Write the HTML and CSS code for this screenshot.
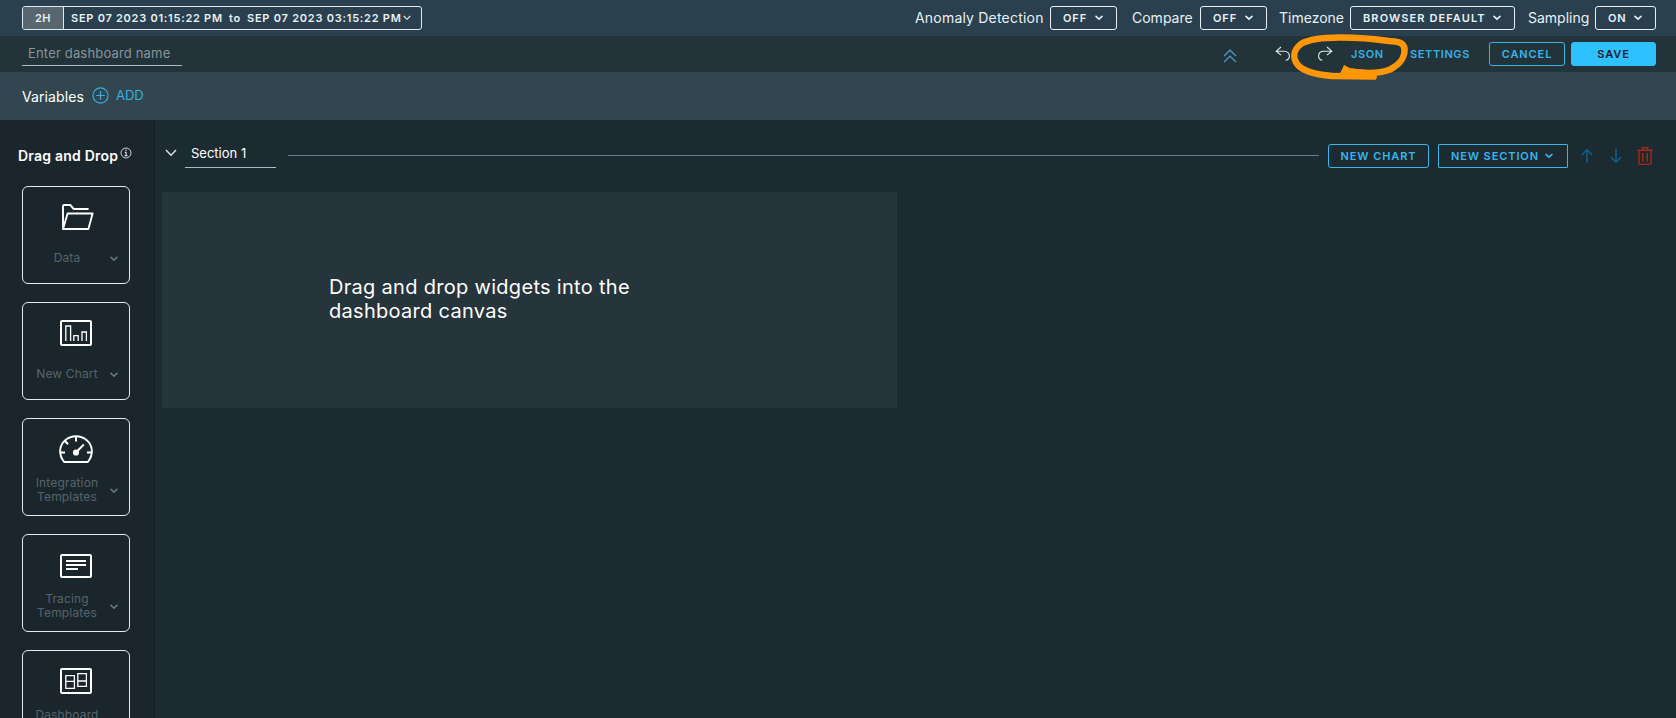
FILE: index.html
```html
<!DOCTYPE html>
<html lang="en">
<head>
<meta charset="utf-8">
<title>Dashboard editor</title>
<link rel="stylesheet" href="styles.css">
</head>
<body>
<svg class="defs" width="0" height="0">
  <symbol id="caret" viewBox="0 0 8 6"><path d="M1 1.3 4 4.2 7 1.3" fill="none" stroke="currentColor" stroke-width="1.6" stroke-linecap="round"/></symbol>
</svg>
<div class="app">
  <header class="topbar">
    <div class="range">
      <span class="range-preset">2H</span>
      <span class="range-text"><span class="from">SEP 07 2023 01:15:22 PM</span><span class="to">to</span><span class="until">SEP 07 2023 03:15:22 PM</span></span>
      <svg class="range-caret" width="8" height="6" viewBox="0 0 8 6"><path d="M.8 1 4 4.3 7.2 1" fill="none" stroke="currentColor" stroke-width="1.1"/></svg>
    </div>
    <div class="options">
      <div class="option anomaly"><span class="label">Anomaly Detection</span><button class="btn light"><span>OFF</span><svg class="caret"><use href="#caret"/></svg></button></div>
      <div class="option compare"><span class="label">Compare</span><button class="btn light"><span>OFF</span><svg class="caret"><use href="#caret"/></svg></button></div>
      <div class="option timezone"><span class="label">Timezone</span><button class="btn light"><span>BROWSER DEFAULT</span><svg class="caret"><use href="#caret"/></svg></button></div>
      <div class="option sampling"><span class="label">Sampling</span><button class="btn light"><span>ON</span><svg class="caret"><use href="#caret"/></svg></button></div>
    </div>
  </header>

  <div class="toolbar">
    <div class="name-field">Enter dashboard name</div>
    <div class="actions">
      <svg class="collapse" width="14" height="14" viewBox="0 0 14 14"><path d="M1 7 7 1.2 13 7M1 13 7 7.2 13 13" fill="none" stroke="currentColor" stroke-width="1.2"/></svg>
      <svg class="undo" width="16" height="16" viewBox="0 0 16 16"><path d="M6 1 1.2 5.2 6 9.2M1.5 5.2H9C12.5 5.2 14.4 7.3 14.4 10 14.4 12.2 13 13.8 10.8 14.4" fill="none" stroke="currentColor" stroke-width="1.1"/></svg>
      <svg class="redo" width="16" height="16" viewBox="0 0 16 16"><path d="M10 1 14.8 5.2 10 9.2M14.5 5.2H7C3.5 5.2 1.6 7.3 1.6 10 1.6 12.2 3 13.8 5.2 14.4" fill="none" stroke="currentColor" stroke-width="1.1"/></svg>
      <a class="link json">JSON</a>
      <a class="link settings">SETTINGS</a>
      <button class="btn outline cancel"><span>CANCEL</span></button>
      <button class="btn solid save"><span>SAVE</span></button>
    </div>
    <svg class="marker" width="124" height="50" viewBox="0 0 124 50">
      <path d="M62 39.500C76 41.500 92 41.500 102 37.500 113 32 117 24 116.500 17 116 10 109 9.500 101 9 84 6.500 70 5.500 52 5.500 34 5.500 21 7 13 12 5 18 5 26 9 32 16 41 32 43 44 44L88 44.500" fill="none" stroke="#ff9606" stroke-width="6.500" stroke-linejoin="round"/>
      <path d="M56 33 63 36.500 88 39 89 46.500 50 45 53.500 38.500Z" fill="#ff9606"/>
    </svg>
  </div>

  <div class="variables">
    <span class="variables-title">Variables</span>
    <svg class="plus" width="17" height="17" viewBox="0 0 17 17"><path d="M8.5 4.2V12.8M4.2 8.5H12.8" stroke="currentColor" stroke-width="1.2"/><circle cx="8.5" cy="8.5" r="7.6" fill="none" stroke="currentColor" stroke-width="1.1"/></svg>
    <span class="add">ADD</span>
  </div>

  <div class="body">
    <aside class="sidebar">
      <div class="sidebar-title"><span>Drag and Drop</span>
        <svg class="info" width="12" height="12" viewBox="0 0 12 12"><circle cx="6" cy="6" r="5" fill="none" stroke="currentColor" stroke-width=".9"/><path d="M6 2.6V4M4.7 5.2H6.1V8.6M4.4 8.8H7.7" fill="none" stroke="currentColor" stroke-width="1.1"/></svg>
      </div>
      <div class="cards">
        <div class="card">
          <svg class="glyph" width="36" height="32" viewBox="0 0 36 32"><path d="M5 26.500V4.200Q5 3 6.2 3H12.2L15.8 7H30.6M5 27 9.6 11.500H34.6L30.4 27Z" fill="none" stroke="currentColor" stroke-width="1.9" stroke-linejoin="round"/></svg>
          <div class="card-row"><span class="card-label">Data</span><svg class="caret"><use href="#caret"/></svg></div>
        </div>
        <div class="card">
          <svg class="glyph" width="36" height="32" viewBox="0 0 36 32"><rect x="3" y="3" width="30" height="24" rx="1" fill="none" stroke="currentColor" stroke-width="2"/><path d="M7.8 23V8H12.6V23M15.8 23V17.6H20.2V23M24 23V14H28.4V23" fill="none" stroke="currentColor" stroke-width="1.3"/></svg>
          <div class="card-row"><span class="card-label">New Chart</span><svg class="caret"><use href="#caret"/></svg></div>
        </div>
        <div class="card">
          <svg class="glyph" width="36" height="32" viewBox="0 0 36 32"><path d="M6.2 28C.2 20.500 1 11.500 7.5 6C13.5 1 22.5 1 28.5 6C35 11.500 35.8 20.500 29.8 28Z" fill="none" stroke="currentColor" stroke-width="1.9" stroke-linejoin="round"/><path d="M18 2V7.500M2.5 18.500H7M29 18.500H33.5M7.2 7.300 10 10.300M18 18.500 25.8 10.500" stroke="currentColor" stroke-width="2"/><circle cx="18" cy="18.500" r="3.1" fill="currentColor"/></svg>
          <div class="card-row"><span class="card-label">Integration<br>Templates</span><svg class="caret"><use href="#caret"/></svg></div>
        </div>
        <div class="card">
          <svg class="glyph" width="36" height="32" viewBox="0 0 36 32"><rect x="3" y="5" width="30" height="22" rx="1" fill="none" stroke="currentColor" stroke-width="2"/><path d="M8 11H28M8 15H28M8 19H20" stroke="currentColor" stroke-width="2"/></svg>
          <div class="card-row"><span class="card-label">Tracing<br>Templates</span><svg class="caret"><use href="#caret"/></svg></div>
        </div>
        <div class="card">
          <svg class="glyph" width="36" height="32" viewBox="0 0 36 32"><rect x="3" y="3" width="30" height="24" rx="1" fill="none" stroke="currentColor" stroke-width="2"/><path d="M7.8 9.6H16.4V22.4H7.8ZM7.8 15.4H16.4M19.8 7.6H28.4V20.4H19.8ZM19.8 15H28.4" fill="none" stroke="currentColor" stroke-width="1.3"/></svg>
          <div class="card-row"><span class="card-label">Dashboard<br>Templates</span><svg class="caret"><use href="#caret"/></svg></div>
        </div>
      </div>
    </aside>

    <main class="main">
      <div class="section-head">
        <svg class="section-caret" width="12" height="8" viewBox="0 0 12 8"><path d="M1 1 6 6.3 11 1" fill="none" stroke="currentColor" stroke-width="1.4"/></svg>
        <div class="section-name">Section 1</div>
        <div class="rule"></div>
        <button class="btn outline new-chart"><span>NEW CHART</span></button>
        <button class="btn outline new-section"><span>NEW SECTION</span><svg class="caret"><use href="#caret"/></svg></button>
        <svg class="arrow up" width="12" height="16" viewBox="0 0 12 16"><path d="M6 15V2M.8 7 6 1.8 11.2 7" fill="none" stroke="currentColor" stroke-width="1.5"/></svg>
        <svg class="arrow down" width="12" height="16" viewBox="0 0 12 16"><path d="M6 1V14M.8 9 6 14.2 11.2 9" fill="none" stroke="currentColor" stroke-width="1.5"/></svg>
        <svg class="trash" width="16" height="20" viewBox="0 0 16 20"><path d="M.3 4.3H15.7M5.3 4V1.7H10.7V4M2 4.5V17Q2 18.4 3.4 18.4H12.6Q14 18.4 14 17V4.5M5.7 7V15.5M10.3 7V15.5" fill="none" stroke="currentColor" stroke-width="1.4"/></svg>
      </div>
      <div class="canvas"><p class="canvas-text">Drag and drop widgets into the<br>dashboard canvas</p></div>
    </main>
  </div>
</div>
</body>
</html>
```

FILE: styles.css
```css
* { box-sizing: border-box; }
body { margin: 0; overflow: hidden; font-family: Inter, "Open Sans", sans-serif; background: #1c2b32; color: #fff; }
svg { display: block; flex: none; }
.defs { position: absolute; }
span, a { white-space: nowrap; }
.app { height: 718px; display: flex; flex-direction: column; overflow: hidden; }

.topbar { height: 36px; flex: none; background: #2a404e; display: flex; justify-content: space-between; align-items: center; padding: 0 20px 0 22px; color: #e8f1f6; }
.range { width: 400px; height: 24px; border: 1px solid #dfeaf0; border-radius: 3px; display: flex; align-items: center; font-size: 11px; font-weight: 600; overflow: hidden; }
.range-preset { width: 41px; height: 22px; line-height: 22px; text-align: center; background: #57666f; border-right: 1px solid #dfeaf0; letter-spacing: .5px; flex: none; }
.range-text { display: flex; padding-left: 7px; }
.from { width: 158px; letter-spacing: .74px; }
.to { width: 18px; letter-spacing: .6px; }
.until { width: 156px; letter-spacing: .76px; }

.options { display: flex; }
.option { display: flex; align-items: center; }
.label { font-size: 14px; padding-bottom: 1px; }
.anomaly .label { width: 135px; letter-spacing: .2px; }
.anomaly { margin-right: 15px; }
.compare .label { width: 68px; letter-spacing: 0; }
.compare { margin-right: 12px; }
.timezone .label { width: 71px; letter-spacing: 0; }
.timezone { margin-right: 13px; }
.sampling .label { width: 67px; letter-spacing: 0; }

.btn { height: 24px; border: 1px solid; border-radius: 3px; background: none; display: flex; align-items: center; justify-content: space-between; padding: 0 13px 0 12px; font: 600 11px Inter, sans-serif; letter-spacing: .9px; color: #e8f1f6; flex: none; }
.caret { width: 8px; height: 6px; }
.anomaly .btn, .compare .btn { width: 67px; }
.timezone .btn { width: 165px; letter-spacing: 1.1px; }
.sampling .btn { width: 61px; }

.toolbar { height: 36px; flex: none; background: #22333a; display: flex; justify-content: space-between; padding: 0 20px 0 22px; position: relative; }
.name-field { width: 160px; height: 30px; border-bottom: 1px solid #adbbc4; padding: 7px 6px 0; font-size: 13px; line-height: 20px; color: #87959c; letter-spacing: .17px; white-space: nowrap; }
.actions { display: flex; align-items: center; color: #e0e8ec; }
.collapse { color: #4a9cc0; margin: 3px 38px 0 0; }
.undo { margin-right: 26px; }
.redo { margin-right: 18px; }
.link { font-size: 11px; font-weight: 600; color: #38b0e3; letter-spacing: .6px; }
.json { width: 59px; }
.settings { width: 79px; }
.outline { color: #38b6ea; }
.cancel { width: 76px; margin-right: 6px; justify-content: center; padding: 0; }
.solid { background: #2fc0ff; border-color: #2fc0ff; color: #0d1d26; }
.save { width: 85px; justify-content: center; padding: 0; }
.marker { position: absolute; left: 1288px; top: -4px; z-index: 2; }

.variables { height: 48px; flex: none; background: #32464f; display: flex; align-items: center; padding-left: 22px; }
.variables-title { width: 70px; font-size: 14px; letter-spacing: .1px; }
.plus { color: #38b0e3; margin: 0 7px 2px 0; }
.add { font-size: 13px; color: #38b0e3; padding-bottom: 3px; }

.body { flex: 1; min-height: 0; display: flex; }
.sidebar { width: 155px; flex: none; background: #1b262c; border-right: 1px solid #111c22; overflow: hidden; }
.sidebar-title { height: 66px; display: flex; padding: 27px 0 0 18px; font-size: 14px; line-height: 18px; font-weight: 600; }
.sidebar-title span { width: 102px; letter-spacing: .22px; }
.info { color: #dbe3e7; }
.cards { display: flex; flex-direction: column; gap: 18px; padding-left: 22px; }
.card { width: 108px; height: 98px; flex: none; border: 1px solid #e4eaed; border-radius: 6px; padding: 15px 11px 0 13px; }
.glyph { margin-left: 22px; color: #fff; }
.card-row { height: 48px; display: flex; align-items: center; justify-content: space-between; color: #55646b; }
.card-label { width: 62px; text-align: center; font-size: 12px; letter-spacing: .15px; line-height: 14px; display: flex; flex-direction: column; align-items: center; justify-content: center; }
.card .caret { margin-top: 2px; color: #65747b; }

.main { flex: 1; min-width: 0; padding: 24px 23px 0 7px; }
.section-head { height: 24px; display: flex; align-items: center; padding-left: 3px; }
.section-caret { color: #dce5e9; margin: 0 8px 6px 0; }
.section-name { width: 91px; height: 27px; margin: -4px 12px 0 0; border-bottom: 1px solid #adbbc4; padding-left: 6px; font-size: 13px; line-height: 25px; }
.rule { flex: 1; height: 1px; background: #6a7d87; margin: 0 9px 1px 0; }
.new-chart { width: 101px; margin-right: 9px; justify-content: center; padding: 0; }
.new-section { width: 130px; margin-right: 13px; border-radius: 1px; padding-right: 14px; }
.arrow { color: #08618f; }
.up { margin-right: 17px; }
.down { margin-right: 15px; }
.trash { color: #a62b16; }
.canvas { width: 735px; height: 216px; margin-top: 24px; background: #26343b; padding: 83px 0 0 167px; }
.canvas-text { margin: 0; font-size: 20px; letter-spacing: .3px; line-height: 24px; white-space: nowrap; }
```
